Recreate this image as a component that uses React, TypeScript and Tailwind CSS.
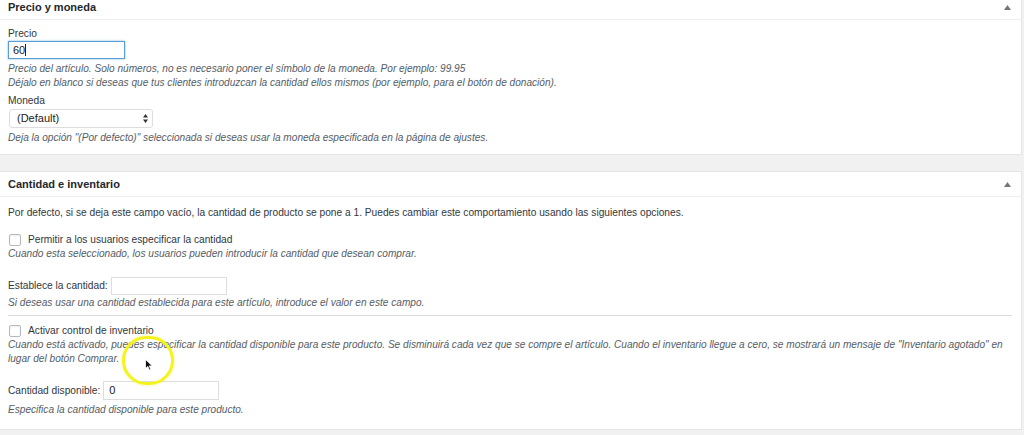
function Toggle() {
  return (
    <svg width="7" height="5" viewBox="0 0 7 5" className="fill-[#72777c]">
      <path d="M3.5 0 L7 5 L0 5 Z" />
    </svg>
  )
}

function SelectArrows() {
  return (
    <svg width="5" height="9" viewBox="0 0 5 9" className="fill-[#333]">
      <path d="M2.5 0 L5 3.5 L0 3.5 Z M2.5 9 L5 5.5 L0 5.5 Z" />
    </svg>
  )
}

function Panel({ title, children, className = "" }: { title: string; children: React.ReactNode; className?: string }) {
  return (
    <div className={`bg-white border border-[#e5e5e5] border-l-0 w-[1022px] ${className}`}>
      <div className="h-[25px] flex items-center justify-between pl-[8px] pr-[10px] border-b border-[#eeeeee]">
        <h2 className="text-[11px] font-bold text-[#23282d]">{title}</h2>
        <Toggle />
      </div>
      {children}
    </div>
  )
}

function Help({ children }: { children: React.ReactNode }) {
  return <p className="italic text-[#555d66] leading-[14px] text-[10.1px] whitespace-nowrap">{children}</p>
}

function Checkbox() {
  return <span className="inline-block w-[12px] h-[12px] border border-[#b4b9be] rounded-[2px] bg-white shadow-[inset_0_1px_2px_rgba(0,0,0,0.07)]" />
}

export default function App() {
  return (
    <div className="relative w-[1024px] h-[435px] overflow-hidden bg-[#f1f1f1] font-['Liberation_Sans',Arial,sans-serif] text-[10.2px] text-[#32373c]">
      <Panel title="Precio y moneda" className="-mt-[5px] border-t-0">
        <div className="pl-[8px] pt-[7px] pb-[9px]">
          <label className="block leading-[14px]">Precio</label>
          <div className="w-[117px] h-[18px] border border-[#5b9dd9] shadow-[0_0_2px_rgba(30,140,190,0.6)] flex items-center pl-[4px] text-[11px] text-[#222]">
            60<span className="w-px h-[12px] bg-[#222]" />
          </div>
          <div className="mt-[3px]">
            <Help>Precio del artículo. Solo números, no es necesario poner el símbolo de la moneda. Por ejemplo: 99.95</Help>
            <Help>Déjalo en blanco si deseas que tus clientes introduzcan la cantidad ellos mismos (por ejemplo, para el botón de donación).</Help>
          </div>
          <label className="block leading-[14px] mt-[4px]">Moneda</label>
          <div className="ml-px mt-px w-[144px] h-[19px] border border-[#dddddd] rounded-[3px] flex items-center justify-between pl-[7px] pr-[4px] text-[11px] text-[#222]">
            <span>(Default)</span>
            <SelectArrows />
          </div>
          <div className="mt-[3px]">
            <Help>Deja la opción "(Por defecto)" seleccionada si deseas usar la moneda especificada en la página de ajustes.</Help>
          </div>
        </div>
      </Panel>

      <Panel title="Cantidad e inventario" className="mt-[16px]">
        <div className="pl-[8px] pr-[9px] pt-[9px] pb-[12px]">
          <p className="leading-[14px]">
            Por defecto, si se deja este campo vacío, la cantidad de producto se pone a 1. Puedes cambiar este comportamiento usando las siguientes opciones.
          </p>
          <div className="mt-[13px] flex items-center gap-[7px] h-[14px] pl-px">
            <Checkbox />
            <span>Permitir a los usuarios especificar la cantidad</span>
          </div>
          <Help>Cuando esta seleccionado, los usuarios pueden introducir la cantidad que desean comprar.</Help>
          <div className="mt-[16px] flex items-center gap-[3px]">
            <span>Establece la cantidad:</span>
            <div className="w-[116px] h-[18px] border border-[#dddddd]" />
          </div>
          <div className="mt-px">
            <Help>Si deseas usar una cantidad establecida para este artículo, introduce el valor en este campo.</Help>
          </div>
          <div className="mt-[5px] border-t border-[#dddddd]" />
          <div className="mt-[8px] flex items-center gap-[7px] h-[14px] pl-px">
            <Checkbox />
            <span>Activar control de inventario</span>
          </div>
          <Help>
            Cuando está activado, puedes especificar la cantidad disponible para este producto. Se disminuirá cada vez que se compre el artículo. Cuando el inventario llegue a cero, se mostrará un mensaje de "Inventario agotado" en
          </Help>
          <Help>lugar del botón Comprar.</Help>
          <div className="mt-[15px] flex items-center gap-[3px]">
            <span>Cantidad disponible:</span>
            <div className="w-[116px] h-[19px] border border-[#dddddd] flex items-center pl-[5px] text-[11px] text-[#222]">0</div>
          </div>
          <div className="mt-[3px]">
            <Help>Especifica la cantidad disponible para este producto.</Help>
          </div>
        </div>
      </Panel>

      {/* cursor highlight overlay */}
      <div className="absolute left-[122px] top-[336px] w-[52px] h-[49px] rounded-full border-[3px] border-[#f4f41c] shadow-[0_0_3px_rgba(240,240,30,0.6)]" />
      <svg className="absolute left-[145px] top-[359px]" width="8" height="12" viewBox="0 0 8 12">
        <path d="M0.5 0.5 L0.5 9.5 L2.8 7.4 L4.4 11 L5.8 10.4 L4.3 6.9 L7.3 6.9 Z" fill="#111" stroke="#fff" strokeWidth="0.8" />
      </svg>
    </div>
  )
}
